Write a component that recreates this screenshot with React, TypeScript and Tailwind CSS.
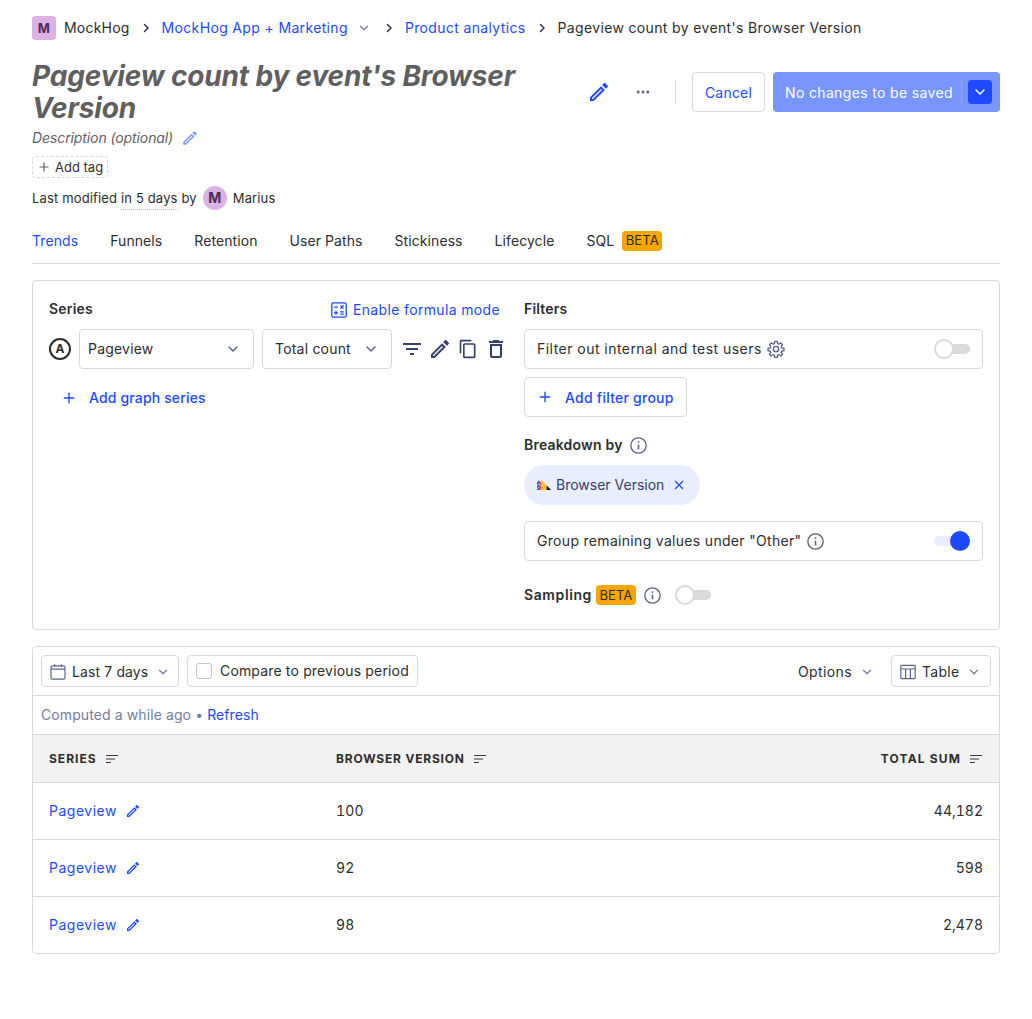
import React from "react";

const EDIT = "M14.06 9.02l.92.92L5.92 19H5v-.92l9.06-9.06M17.66 3c-.25 0-.51.1-.7.29l-1.83 1.83 3.75 3.75 1.83-1.83c.39-.39.39-1.02 0-1.41l-2.34-2.34c-.2-.2-.45-.29-.71-.29zm-3.6 3.19L3 17.25V21h3.75L17.81 9.94l-3.75-3.75z";
const COPY = "M16 1H4c-1.1 0-2 .9-2 2v14h2V3h12V1zm3 4H8c-1.1 0-2 .9-2 2v14c0 1.1.9 2 2 2h11c1.1 0 2-.9 2-2V7c0-1.1-.9-2-2-2zm0 16H8V7h11v14z";
const TRASH = "M6 19c0 1.1.9 2 2 2h8c1.1 0 2-.9 2-2V7H6v12zM8 9h8v10H8V9zm7.5-5l-1-1h-5l-1 1H5v2h14V4z";
const FILTER = "M10 18h4v-2h-4v2zM3 6v2h18V6H3zm3 7h12v-2H6v2z";

function Fill({ d, className }: { d: string; className: string }) {
  return (
    <svg viewBox="0 0 24 24" fill="currentColor" className={className}>
      <path d={d} />
    </svg>
  );
}

function ChevDown({ className }: { className: string }) {
  return (
    <svg viewBox="0 0 16 16" fill="none" stroke="currentColor" strokeWidth="1.5" strokeLinecap="round" strokeLinejoin="round" className={className}>
      <path d="M4 6l4 4 4-4" />
    </svg>
  );
}

function ChevRight() {
  return (
    <svg viewBox="0 0 16 16" fill="none" stroke="#2d3557" strokeWidth="1.5" strokeLinecap="round" strokeLinejoin="round" className="w-4 h-4 shrink-0">
      <path d="M6.5 4.5L10 8l-3.5 3.5" />
    </svg>
  );
}

function Plus({ className }: { className: string }) {
  return (
    <svg viewBox="0 0 16 16" fill="none" stroke="currentColor" strokeWidth="1.6" className={className}>
      <path d="M8 2v12M2 8h12" />
    </svg>
  );
}

function Info({ className }: { className: string }) {
  return (
    <svg viewBox="0 0 16 16" fill="none" stroke="currentColor" strokeWidth="1.25" className={className}>
      <circle cx="8" cy="8" r="7.2" />
      <path d="M8 7.2v4.4" strokeWidth="1.5" />
      <circle cx="8" cy="4.8" r="0.9" fill="currentColor" stroke="none" />
    </svg>
  );
}

function Gear() {
  return (
    <svg viewBox="0 0 24 24" fill="none" stroke="currentColor" strokeWidth="1.8" strokeLinejoin="round" className="w-[18px] h-[18px] text-[#5a6489] ml-[5px]">
      <path d="M10.3 2h3.4l.5 2.9 1.7.7 2.4-1.7 2.4 2.4-1.7 2.4.7 1.7 2.9.5v3.4l-2.9.5-.7 1.7 1.7 2.4-2.4 2.4-2.4-1.7-1.7.7-.5 2.9h-3.4l-.5-2.9-1.7-.7-2.4 1.7-2.4-2.4 1.7-2.4-.7-1.7-2.9-.5v-3.4l2.9-.5.7-1.7-1.7-2.4 2.4-2.4 2.4 1.7 1.7-.7z" />
      <circle cx="12" cy="12" r="3.6" />
    </svg>
  );
}

function Sort() {
  return (
    <svg viewBox="0 0 14 10" fill="none" stroke="#3a3a3a" strokeWidth="1.1" className="w-[14px] h-[10px]">
      <path d="M1 1.5h12M1 5h9M1 8.5h5" />
    </svg>
  );
}

function Toggle({ on }: { on?: boolean }) {
  return (
    <span className="relative block w-9 h-[10px]">
      <span className={on ? "absolute inset-x-0 inset-y-0 rounded-full bg-[#e8edff]" : "absolute left-[1px] right-0 inset-y-0 rounded-full bg-[#d9d9d9]"} />
      {on ? (
        <span className="absolute right-0 top-[-5px] w-5 h-5 rounded-full bg-[#1d4aff]" />
      ) : (
        <span className="absolute left-0 top-[-5px] w-5 h-5 rounded-full bg-white border-2 border-[#d9d9d9]" />
      )}
    </span>
  );
}

function Beta() {
  return (
    <span className="inline-flex items-center justify-center w-10 h-5 rounded-[4px] bg-[#f7a501] text-[#2d2d2d] text-[13px] tracking-[0.1px]">BETA</span>
  );
}

function Logo() {
  return (
    <svg viewBox="0 0 15 10" className="w-[15px] h-[10px] mr-[4px]">
      <path d="M0 2.4l2-2v2.6l-2 2zM0 6l2-2v2.6l-2 2zM0 9.6l2-2V10H0z" fill="#1d4aff" />
      <path d="M2 .4l2.4 2.4V6L2 3.6zM2 4.4l2.4 2.4V10H2z" fill="#f54e00" />
      <path d="M4.4 0L7 2.6V6L4.4 3.4zM4.4 4.2L7 6.8V10H4.4z" fill="#f9bd2b" />
      <path d="M7 2.8L9.6 5.4V10H7z" fill="#f9bd2b" />
      <path d="M9.6 5.6L14.2 10H9.6z" fill="#111" />
    </svg>
  );
}

function TableIcon() {
  return (
    <svg viewBox="0 0 16 16" fill="none" stroke="#5a6489" strokeWidth="1.2" className="w-4 h-4 mr-[6px]">
      <rect x="0.8" y="1.3" width="14.4" height="13.4" rx="1" />
      <path d="M0.8 5h14.4M5.6 5v9.7M10.4 5v9.7" />
    </svg>
  );
}

function Calendar() {
  return (
    <svg viewBox="0 0 16 16" fill="none" stroke="#5a6489" strokeWidth="1.2" className="w-4 h-4 mr-[6px]">
      <rect x="1" y="1.8" width="14" height="13.4" rx="1.6" />
      <path d="M1 5.2h14M4.6 0.3v2.4M11.4 0.3v2.4" />
    </svg>
  );
}

function Formula() {
  return (
    <svg viewBox="0 0 16 16" fill="none" stroke="currentColor" strokeWidth="1.3" className="w-4 h-4 mr-[6px]">
      <rect x="0.8" y="0.8" width="14.4" height="14.4" rx="1.6" />
      <path d="M3 5.2h4M9.4 3.4l3.2 3.2M12.6 3.4L9.4 6.6M3 10.8h4M5 8.8v4M9.2 9.8h3.6M9.2 12.2h3.6" />
    </svg>
  );
}

const rows = [
  ["100", "44,182"],
  ["92", "598"],
  ["98", "2,478"],
];

export default function App() {
  return (
    <div className="min-h-[1019px] bg-white px-8 pt-4 text-sm text-[#2d2d2d] tracking-[0.2px] font-['Inter','Liberation_Sans',sans-serif]">
      <nav className="flex items-center h-6 tracking-[0.35px]">
        <span className="w-6 h-6 rounded-[4px] bg-[#dcb1e3] text-[#4d2a55] text-[13px] font-bold flex items-center justify-center">M</span>
        <span className="ml-2 tracking-[0.2px]">MockHog</span>
        <span className="mx-2 flex"><ChevRight /></span>
        <span className="text-[#1d4aff]">MockHog App + Marketing</span>
        <ChevDown className="w-[14px] h-[14px] ml-[9px] text-[#747ea1]" />
        <span className="ml-[10px] mr-2 flex"><ChevRight /></span>
        <span className="text-[#1d4aff]">Product analytics</span>
        <span className="mx-2 flex"><ChevRight /></span>
        <span>Pageview count by event's Browser Version</span>
      </nav>

      <header className="flex items-center justify-between mt-5">
        <h1 className="w-[500px] text-[28px] leading-8 font-bold italic text-[#5f5f5f] tracking-[-0.15px]">Pageview count by event's Browser Version</h1>
        <div className="flex items-center">
          <Fill d={EDIT} className="w-6 h-6 text-[#1d4aff]" />
          <svg viewBox="0 0 16 16" fill="#5a6489" className="w-4 h-4 ml-[24px]">
            <circle cx="3.2" cy="8" r="1.5" />
            <circle cx="8" cy="8" r="1.5" />
            <circle cx="12.8" cy="8" r="1.5" />
          </svg>
          <span className="w-px h-6 bg-[#d9d9d9] ml-6" />
          <button className="ml-4 w-[73px] h-10 pt-[1px] rounded-[4px] border border-[#d9d9d9] text-[#1d4aff] tracking-[0.2px]">Cancel</button>
          <div className="ml-2 w-[227px] h-10 rounded-[4px] bg-[#7995ff] flex items-center pl-3 pr-2 text-white tracking-[0.35px]">
            <span className="flex-1 whitespace-nowrap pt-[1px]">No changes to be saved</span>
            <span className="w-px h-6 bg-[#8ea6ff] mr-[6px]" />
            <span className="w-6 h-6 rounded-[4px] bg-[#1d4aff] flex items-center justify-center">
              <ChevDown className="w-4 h-4 text-white" />
            </span>
          </div>
        </div>
      </header>

      <div className="flex items-center mt-1 h-5 italic text-[#5f5f5f] tracking-[-0.1px]">
        Description (optional)
        <Fill d={EDIT} className="w-[18px] h-[18px] ml-[8px] text-[#7995ff]" />
      </div>

      <div className="mt-2 w-[76px] h-[22px] rounded-[4px] border border-dashed border-[#d9d9d9] flex items-center pl-[5px] text-[13px] tracking-normal">
        <Plus className="w-3 h-3 mr-[5px] text-[#5f5f5f]" />
        Add tag
      </div>

      <div className="flex items-center mt-2 h-6 text-[13px] tracking-[0.15px]">
        <span>Last modified&nbsp;</span>
        <span className="border-b border-dotted border-[#bdbdbd] leading-[22px]">in 5 days</span>
        <span>&nbsp;by</span>
        <span className="ml-[6px] w-6 h-6 rounded-full bg-[#dcb1e3] text-[#4d2a55] font-bold text-sm flex items-center justify-center">M</span>
        <span className="ml-[6px]">Marius</span>
      </div>

      <div className="flex items-center gap-8 mt-[11px] h-[43px] border-b border-[#d9d9d9] pb-[3px] tracking-[0.08px]">
        <span className="text-[#1d4aff]">Trends</span>
        <span>Funnels</span>
        <span>Retention</span>
        <span>User Paths</span>
        <span>Stickiness</span>
        <span>Lifecycle</span>
        <span className="flex items-center gap-2">SQL <Beta /></span>
      </div>

      <section className="mt-4 h-[350px] rounded-[4px] border border-[#d9d9d9] px-4 pt-4 grid grid-cols-[451px_459px] gap-x-6">
        <div>
          <div className="flex items-center justify-between h-6">
            <span className="font-semibold">Series</span>
            <span className="flex items-center text-[#1d4aff] mt-[2px] tracking-[0.35px]"><Formula />Enable formula mode</span>
          </div>
          <div className="flex items-center mt-2">
            <span className="w-[22px] h-[22px] rounded-full border-2 border-[#2d2d2d] text-xs font-bold flex items-center justify-center shrink-0">A</span>
            <div className="ml-2 w-[175px] h-10 shrink-0 rounded-[4px] border border-[#d9d9d9] flex items-center justify-between pl-2 pr-3">
              Pageview
              <ChevDown className="w-4 h-4 text-[#5a6489]" />
            </div>
            <div className="ml-2 w-[130px] h-10 shrink-0 rounded-[4px] border border-[#d9d9d9] flex items-center justify-between pl-3 pr-3">
              Total count
              <ChevDown className="w-4 h-4 text-[#5a6489]" />
            </div>
            <div className="ml-2 flex items-center gap-1 shrink-0 text-[#35416b]">
              <Fill d={FILTER} className="w-6 h-6" />
              <Fill d={EDIT} className="w-6 h-6" />
              <span className="w-6 h-6 flex items-center justify-center"><Fill d={COPY} className="w-5 h-5" /></span>
              <Fill d={TRASH} className="w-6 h-6" />
            </div>
          </div>
          <div className="flex items-center mt-[19px] ml-[13px] h-5 text-[#1d4aff] tracking-[0.15px]">
            <Plus className="w-[14px] h-[14px] mr-[13px]" />
            <span className="font-medium">Add graph series</span>
          </div>
        </div>

        <div>
          <div className="h-6 flex items-center font-semibold">Filters</div>
          <div className="mt-2 h-10 rounded-[4px] border border-[#d9d9d9] flex items-center justify-between pl-3 pr-3">
            <span className="flex items-center tracking-[0.46px]">Filter out internal and test users<Gear /></span>
            <Toggle />
          </div>
          <div className="mt-2 w-[163px] h-10 rounded-[4px] border border-[#d9d9d9] flex items-center pl-[13px] text-[#1d4aff] tracking-[0.24px]">
            <Plus className="w-[14px] h-[14px] mr-[13px]" />
            <span className="font-medium pt-[1px]">Add filter group</span>
          </div>
          <div className="flex items-center mt-[18px] h-5 font-semibold">
            Breakdown by
            <Info className="w-[17px] h-[17px] ml-[7px] text-[#5a6489]" />
          </div>
          <div className="mt-[10px] w-[176px] h-10 rounded-full bg-[#e8edff] flex items-center pl-[13px] text-[#35416b] tracking-normal">
            <Logo />
            <span>Browser Version</span>
            <svg viewBox="0 0 10 10" fill="none" stroke="#1d4aff" strokeWidth="1.2" className="w-[10px] h-[10px] ml-[10px]">
              <path d="M1 1l8 8M9 1L1 9" />
            </svg>
          </div>
          <div className="mt-4 h-10 rounded-[4px] border border-[#d9d9d9] flex items-center justify-between pl-3 pr-3">
            <span className="flex items-center tracking-[0.31px]">Group remaining values under "Other"<Info className="w-[17px] h-[17px] ml-[6px] text-[#5f5f5f]" /></span>
            <Toggle on />
          </div>
          <div className="flex items-center mt-6 h-5">
            <span className="font-semibold tracking-[0.6px]">Sampling</span>
            <span className="ml-1"><Beta /></span>
            <Info className="w-[17px] h-[17px] ml-2 text-[#5a6489]" />
            <span className="ml-[14px]"><Toggle /></span>
          </div>
        </div>
      </section>

      <section className="mt-4 rounded-[4px] border border-[#d9d9d9] overflow-hidden">
        <div className="h-[49px] border-b border-[#d9d9d9] flex items-center pl-2 pr-2">
          <div className="w-[138px] h-8 rounded-[4px] border border-[#d9d9d9] flex items-center pl-2 pt-[1px] tracking-[0.12px]">
            <Calendar />
            Last 7 days
            <ChevDown className="w-[14px] h-[14px] ml-2 text-[#747ea1]" />
          </div>
          <div className="ml-2 w-[231px] h-8 rounded-[4px] border border-[#d9d9d9] flex items-center pl-2 tracking-[0.16px]">
            <span className="w-4 h-4 rounded-[3px] border border-[#c4c4c4] mr-2" />
            Compare to previous period
          </div>
          <div className="ml-auto flex items-center pt-[1px] tracking-[0.4px]">
            Options
            <ChevDown className="w-[14px] h-[14px] ml-2 text-[#747ea1]" />
          </div>
          <div className="ml-[17px] w-[100px] h-8 rounded-[4px] border border-[#d9d9d9] flex items-center pl-2 pt-[1px] tracking-[0.3px]">
            <TableIcon />
            Table
            <ChevDown className="w-[14px] h-[14px] ml-[7px] text-[#747ea1]" />
          </div>
        </div>
        <div className="h-[39px] border-b border-[#d9d9d9] flex items-center pl-2 text-[#747ea1] tracking-[0.1px]">
          Computed a while ago •&nbsp;<span className="text-[#1d4aff]">Refresh</span>
        </div>
        <div className="h-[48px] border-b border-[#d9d9d9] bg-[#f2f2f2] grid grid-cols-[287px_1fr_auto] items-center px-4 text-xs font-bold tracking-[0.8px]">
          <span className="flex items-center gap-2 tracking-[1px]">SERIES <Sort /></span>
          <span className="flex items-center gap-2">BROWSER VERSION <Sort /></span>
          <span className="flex items-center gap-2 tracking-[1.15px]">TOTAL SUM <Sort /></span>
        </div>
        {rows.map(([v, n], i) => (
          <div key={v} className={i < 2 ? "h-[57px] grid grid-cols-[287px_1fr_auto] items-center px-4 border-b border-[#d9d9d9] tabular-nums" : "h-[56px] grid grid-cols-[287px_1fr_auto] items-center px-4 tabular-nums"}>
            <span className="flex items-center text-[#1d4aff] tracking-[0.5px]">
              Pageview
              <Fill d={EDIT} className="w-4 h-4 ml-[8px]" />
            </span>
            <span>{v}</span>
            <span className="tracking-normal">{n}</span>
          </div>
        ))}
      </section>
    </div>
  );
}
